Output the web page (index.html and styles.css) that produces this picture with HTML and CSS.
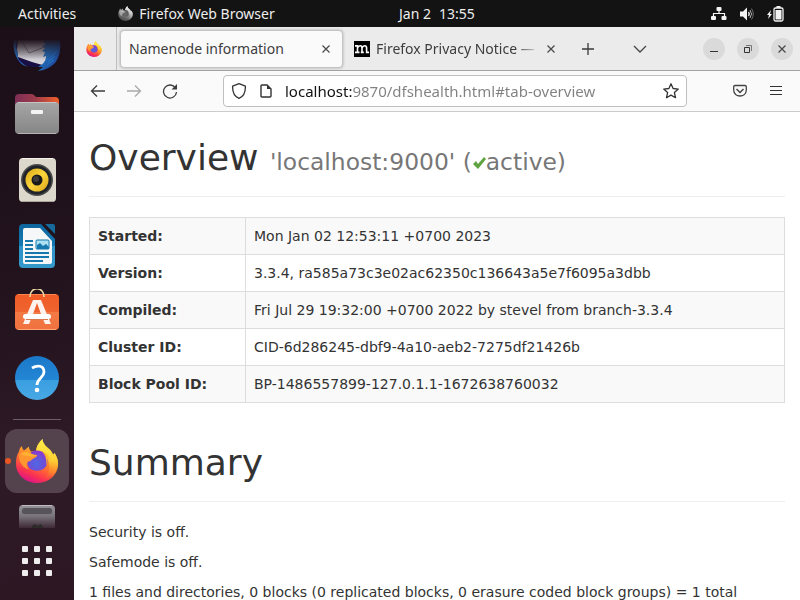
FILE: index.html
```html
<!DOCTYPE html>
<html lang="en">
<head>
<meta charset="utf-8">
<title>Namenode information</title>
<link rel="stylesheet" href="styles.css">
</head>
<body>
<svg class="defs" width="0" height="0" aria-hidden="true">
  <defs>
    <linearGradient id="ff-body" x1=".75" y1=".1" x2=".35" y2="1"><stop offset="0" stop-color="#ffd83a"/><stop offset=".3" stop-color="#ffa42a"/><stop offset=".58" stop-color="#ff6a33"/><stop offset=".8" stop-color="#fb3350"/><stop offset="1" stop-color="#dc1488"/></linearGradient>
    <linearGradient id="ff-tail" x1=".5" y1="0" x2=".4" y2="1"><stop offset="0" stop-color="#fff14a"/><stop offset=".5" stop-color="#ffd036"/><stop offset="1" stop-color="#ff7a1c" stop-opacity="0"/></linearGradient>
    <radialGradient id="ff-globe" cx=".45" cy=".65" r=".65"><stop offset="0" stop-color="#4f68e4"/><stop offset=".6" stop-color="#6d4fd8"/><stop offset="1" stop-color="#8f35cc"/></radialGradient>
    <symbol id="firefox" viewBox="0 0 44 44">
      <path fill="url(#ff-body)" d="M27.500 0c0 4 3 7 6 9.500 3 2.500 4 4.500 4.500 6.500l1.500-2c4 6 4.500 12 2.500 17-3 8-10.500 13-20 13C10 44 1 35 1 25c0-5 .5-9 3-12.500.3-2 1-4 3-5.500 0 2 .8 3 2 4.500l5-4c0 2 .5 3.500 2 5h5c.5-6 3-9 6.500-12.500z"/>
      <path fill="url(#ff-tail)" d="M27.500 0c0 4 3 7 6 9.500 3 2.500 4 4.500 4.500 6.500l1.500-2c4 6 4.500 12 2 18-3 6-8 8-13 8 6-5 7-11 5-18-2-5-7-8-12.500-9.500C21.500 7 24 3.500 27.500 0z"/>
      <path fill="url(#ff-globe)" d="M14 15.500c3-4.500 11-5.500 15.500-1 3.500 3.500 4 9.500 1 13.500-4 5-12.500 5-16.500.5-2.500-3.500-2.500-9 0-13z"/>
      <path fill="#ff9630" d="M4 16c3-4 7-4.500 11.500-2 2 1.800 4.500 1.700 6.500 2 .5 1.500-2 3-4 3.700-1.600 1-2 2.500-5 2.800-2 2.500-1.500 5 .8 8C8 29 3.500 23 4 16z"/>
      <path fill="#ffc038" d="M5.500 14.500c3.500-2 6.500-2 10 0 2 1.500 4.500 1.300 6.500 1.700-3.500 1.500-10 2.500-16.500-1.700z" opacity=".65"/>
      <path fill="#ffb52c" d="M27 12.500c4 1 7.500 4.500 8 9.500l-3-4c.5 3 .5 6-.5 8.500 0-6-.5-10-4.500-14z"/>
    </symbol>
    <symbol id="close" viewBox="0 0 10 10"><path d="M1.500 1.500l7 7M8.500 1.500l-7 7" fill="none" stroke="#484848" stroke-width="1.200"/></symbol>
  </defs>
</svg>

<header class="topbar">
  <div class="topbar-left">
    <button class="topbar-item activities">Activities</button>
    <button class="topbar-item app-menu">
      <svg class="app-icon" width="15" height="15"><use href="#firefox"/></svg>Firefox Web Browser
    </button>
  </div>
  <button class="topbar-item clock"><span>Jan 2</span><span>13:55</span></button>
  <button class="topbar-item status" aria-label="System menu">
    <svg width="16" height="14" viewBox="0 0 16 14"><g fill="#f4f4f4"><rect x="5.500" y="0" width="5" height="4" rx="1"/><rect x="0" y="9" width="5" height="4" rx="1"/><rect x="10.500" y="9" width="5" height="4" rx="1"/></g><path d="M8 4v3M2.500 9V6.500h11V9" fill="none" stroke="#f4f4f4" stroke-width="1.200"/></svg>
    <svg width="16" height="14" viewBox="0 0 16 14"><path fill="#f4f4f4" d="M1 4.500h3L8 0.500v13L4 9.500H1z"/><path d="M9.500 5q1.500 2 0 4" fill="none" stroke="#f4f4f4" stroke-width="1.300"/><path d="M11 3q3 4 0 8" fill="none" stroke="#b0b0b0" stroke-width="1"/><path d="M12.500 1.500q3.500 5.500 0 11" fill="none" stroke="#6a6a6a" stroke-width="1"/></svg>
    <svg width="17" height="16" viewBox="0 0 17 16"><path fill="#f4f4f4" d="M4 4L0 9h2l-1 4 4-5H3z"/><rect x="7" y="2" width="9" height="13" rx="1.500" fill="none" stroke="#f4f4f4" stroke-width="1.300"/><rect x="9.500" y="0" width="4" height="2" fill="#f4f4f4"/><rect x="8.500" y="4" width="6" height="9.500" fill="#f4f4f4"/></svg>
  </button>
</header>

<div class="desktop">
  <nav class="dock" aria-label="Dock">
    <button class="dock-item dock-first" aria-label="Thunderbird Mail">
      <svg width="48" height="55" viewBox="0 0 48 55">
        <defs>
          <linearGradient id="tb-fade" x1="0" y1="0" x2="0" y2="1"><stop offset="0" stop-color="#1c0f18"/><stop offset=".6" stop-color="#1c0f18" stop-opacity="0"/></linearGradient>
          <linearGradient id="tb-blue" x1="0" y1="0" x2="1" y2="1"><stop offset="0" stop-color="#3f86c8"/><stop offset=".5" stop-color="#2367b3"/><stop offset="1" stop-color="#1b2f88"/></linearGradient>
          <linearGradient id="tb-mail" x1="0" y1="0" x2="0" y2="1"><stop offset="0" stop-color="#a7a5ab"/><stop offset="1" stop-color="#dedce2"/></linearGradient>
        </defs>
        <path fill="#1a0f45" d="M1 13h46c1 9-1 18-8 24l-9 3-12 0-12-4c-3-5-5-16-5-23z"/>
        <path fill="url(#tb-mail)" d="M5 13h30v22l-2 4-14-4-14-5-1-8z"/>
        <path fill="none" stroke="#77747e" d="M8 13l8 13 18-7"/>
        <path fill="url(#tb-blue)" d="M31 13h16c1 8 0 17-5 23-4 4-9 7-17 8l5-4h-5c6-3 8-7 8-11l-3 1 2-5-3-1 3-3-3-2 4-2-3-2z"/>
        <path fill="#2a6ab2" d="M1 13h3c-1 5-1 9 1 13v5c1 3 5 6 10 9l-5-2C3 33-1 22 1 13z"/>
        <path d="M35 35l7-6M34 38l7-5M38 30l6-6" stroke="#2b8bd0" fill="none" opacity=".6"/>
        <rect x="0" y="12" width="48" height="34" fill="url(#tb-fade)"/>
      </svg>
    </button>
    <button class="dock-item" aria-label="Files">
      <svg width="48" height="48" viewBox="0 0 48 48">
        <defs><linearGradient id="fold" x1="0" y1="0" x2="1" y2="0"><stop offset="0" stop-color="#7d2e55"/><stop offset=".45" stop-color="#9c3b4c"/><stop offset="1" stop-color="#f0602a"/></linearGradient><linearGradient id="foldf" x1="0" y1="0" x2="0" y2="1"><stop offset="0" stop-color="#a6a6a6"/><stop offset="1" stop-color="#858585"/></linearGradient></defs>
        <path fill="url(#fold)" d="M2 7q0-4 4-4h12q2 0 3 1l2 2h19q4 0 4 4v16H2z"/>
        <rect x="2" y="11" width="44" height="32" rx="4" fill="url(#foldf)"/><path d="M5 11.500h38" stroke="#c5c5c5"/><path d="M5 42.500h38" stroke="#b4b4b4"/>
        <rect x="18" y="19" width="12" height="4" rx="1" fill="#f4f4f4"/>
      </svg>
    </button>
    <button class="dock-item" aria-label="Rhythmbox">
      <svg width="48" height="48" viewBox="0 0 48 48">
        <defs><linearGradient id="yel" x1="0" y1="0" x2="1" y2="1"><stop offset="0" stop-color="#d8a716"/><stop offset=".5" stop-color="#fcd53b"/><stop offset="1" stop-color="#dba51a"/></linearGradient></defs>
        <rect x="6" y="1" width="37" height="44" rx="4" fill="#ddd8cc"/><path d="M9 1.500h31" stroke="#f6f3ea"/><path d="M9 44.500h31" stroke="#aaa59a"/>
        <circle cx="24" cy="23" r="16" fill="#4d4d4e"/><circle cx="24" cy="23" r="14.500" fill="#202329"/><circle cx="24" cy="23" r="11.500" fill="url(#yel)"/><circle cx="24" cy="23" r="5.500" fill="#191919"/><circle cx="23" cy="22" r="3" fill="#3b3b3b"/>
      </svg>
    </button>
    <button class="dock-item" aria-label="LibreOffice Writer">
      <svg width="48" height="48" viewBox="0 0 48 48">
        <defs><linearGradient id="wr" x1="0" y1="0" x2="0" y2="1"><stop offset="0" stop-color="#0f659d"/><stop offset=".5" stop-color="#1479b2"/><stop offset=".51" stop-color="#2d94c8"/><stop offset="1" stop-color="#3498ca"/></linearGradient></defs>
        <path fill="url(#wr)" d="M10 1h18l14 15v25q0 4-4 4H10q-4 0-4-4V5q0-4 4-4z"/><path d="M32 1h8q2 0 2 2v8z" fill="#176a9c"/>
        <path fill="#f5f7f8" d="M12 5h15l12 13v21q0 2-2 2H12q-2 0-2-2V7q0-2 2-2z"/>
        <path d="M12 18h8M12 22h8M12 26h8M12 30h24M12 34h24M12 38h18" stroke="#1678ac" stroke-width="1.800"/>
        <rect x="23" y="17" width="13" height="9" rx="1" fill="#aee0f4" stroke="#1678ac"/><path fill="#1678ac" d="M24 26v-4l3-2 3 3 3-2 3 3v2z"/>
      </svg>
    </button>
    <button class="dock-item" aria-label="Ubuntu Software">
      <svg width="48" height="48" viewBox="0 0 48 48">
        <defs><linearGradient id="sw" x1="0" y1="0" x2="0" y2="1"><stop offset="0" stop-color="#f15c25"/><stop offset=".5" stop-color="#ee6430"/><stop offset=".51" stop-color="#f37a45"/><stop offset="1" stop-color="#ef713e"/></linearGradient></defs>
        <rect x="2" y="5" width="44" height="36" rx="4" fill="url(#sw)"/><path d="M5 40.500h38" stroke="#ffa779"/><path d="M5 5.500h38" stroke="#ff8652"/>
        <path d="M17 8c0-11 14-11 14 0" fill="none" stroke="#eed9a3" stroke-width="1.600"/>
        <path fill="#fff2ed" fill-rule="evenodd" d="M20 11h8l10 24h-6l-2-5H18l-2 5h-6zM24 14l-4 11h8z"/><rect x="10" y="25" width="28" height="5" rx="2.500" fill="#fff"/><path d="M13 30.500h22" stroke="#d9794e"/>
      </svg>
    </button>
    <button class="dock-item" aria-label="Help">
      <svg width="48" height="48" viewBox="0 0 48 48">
        <defs><linearGradient id="hp" x1="0" y1="0" x2="0" y2="1"><stop offset="0" stop-color="#1b78c8"/><stop offset=".54" stop-color="#2386d4"/><stop offset=".55" stop-color="#3a9ee0"/><stop offset="1" stop-color="#48a8e4"/></linearGradient></defs>
        <circle cx="24" cy="23" r="22" fill="url(#hp)"/><path d="M19 13c5-3 12-3 12 4 0 6-7 6-7 13" fill="none" stroke="#fff" stroke-width="2.800"/><circle cx="24" cy="35" r="2.300" fill="#fff"/>
      </svg>
    </button>
    <hr class="dock-rule">
    <button class="dock-item dock-active" aria-label="Firefox">
      <svg width="44" height="44"><use href="#firefox"/></svg>
    </button>
    <button class="dock-item dock-trash" aria-label="Trash">
      <svg width="38" height="24" viewBox="0 0 38 24">
        <defs><linearGradient id="tr" x1="0" y1="0" x2="0" y2="1"><stop offset="0" stop-color="#96939a"/><stop offset=".5" stop-color="#77717a"/><stop offset="1" stop-color="#3d2935"/></linearGradient></defs>
        <path fill="url(#tr)" d="M1 24V5q0-4 4-4h28q4 0 4 4v19z"/><path d="M4 1.500h30" stroke="#bebabf"/><rect x="4" y="4" width="30" height="6" rx="2.500" fill="#56545a"/><path fill="#2d2c2b" d="M13 24q1-3 4-4l3 2 2-2q3 1 3 4z"/>
      </svg>
    </button>
    <button class="dock-apps" aria-label="Show Applications">
      <svg width="30" height="30" viewBox="0 0 30 30" fill="#efedee"><rect width="6" height="6" rx="1"/><rect x="12" width="6" height="6" rx="1"/><rect x="24" width="6" height="6" rx="1"/><rect y="12" width="6" height="6" rx="1"/><rect x="12" y="12" width="6" height="6" rx="1"/><rect x="24" y="12" width="6" height="6" rx="1"/><rect y="24" width="6" height="6" rx="1"/><rect x="12" y="24" width="6" height="6" rx="1"/><rect x="24" y="24" width="6" height="6" rx="1"/></svg>
    </button>
  </nav>

  <div class="browser">
    <div class="tabstrip">
      <button class="pinned" aria-label="Firefox View"><svg width="16" height="16"><use href="#firefox"/></svg></button>
      <div class="tab tab-active"><span class="tab-title">Namenode information</span><button class="icon-btn" aria-label="Close tab"><svg width="10" height="10"><use href="#close"/></svg></button></div>
      <div class="tab">
        <svg class="favicon" width="16" height="16" viewBox="0 0 16 16"><rect width="16" height="16" fill="#000"/><path d="M1 4.900h2.500V12M1 11.400h4.500M3.500 7q.8-2.200 2.600-2.200Q8 4.800 8 7v5M6.800 11.400h3M8 7q.8-2.200 2.600-2.200 2 0 2 2.200v4.400H15" fill="none" stroke="#fff" stroke-width="1.600"/></svg>
        <span class="tab-title tab-fade">Firefox Privacy Notice —</span><button class="icon-btn" aria-label="Close tab"><svg width="10" height="10"><use href="#close"/></svg></button>
      </div>
      <button class="icon-btn new-tab" aria-label="New tab"><svg width="14" height="14" viewBox="0 0 14 14"><path d="M7 1v12M1 7h12" stroke="#3a3a3a" stroke-width="1.300"/></svg></button>
      <button class="icon-btn list-tabs" aria-label="List all tabs"><svg width="14" height="8" viewBox="0 0 14 8"><path d="M1 1l6 6 6-6" fill="none" stroke="#454545" stroke-width="1.300"/></svg></button>
      <div class="window-controls">
        <button aria-label="Minimize"><svg width="10" height="10" viewBox="0 0 10 10"><path d="M1 7.500h8" stroke="#333"/></svg></button>
        <button aria-label="Restore"><svg width="10" height="10" viewBox="0 0 10 10"><path d="M1.500 3.500h5v5h-5z" fill="none" stroke="#333"/><path d="M3 1.500h5.500V7" fill="none" stroke="#777"/></svg></button>
        <button aria-label="Close"><svg width="10" height="10"><use href="#close"/></svg></button>
      </div>
    </div>

    <div class="toolbar">
      <div class="nav-buttons">
        <button class="icon-btn" aria-label="Back"><svg width="16" height="16" viewBox="0 0 16 16"><path d="M15 8H2M7 2.500L1.500 8 7 13.500" fill="none" stroke="#3d3d3d" stroke-width="1.300"/></svg></button>
        <button class="icon-btn" aria-label="Forward" disabled><svg width="16" height="16" viewBox="0 0 16 16"><path d="M1 8h13M9 2.500L14.500 8 9 13.500" fill="none" stroke="#a9a9a9" stroke-width="1.300"/></svg></button>
        <button class="icon-btn" aria-label="Reload"><svg width="16" height="16" viewBox="0 0 16 16"><path d="M13.500 5A6.500 6.500 0 1 0 14.500 9" fill="none" stroke="#3d3d3d" stroke-width="1.300"/><path d="M15 1v5.500H9.500z" fill="#3d3d3d"/></svg></button>
      </div>
      <div class="urlbar">
        <svg width="16" height="16" viewBox="0 0 16 16"><path d="M8 .7l6.400 2.400C14.600 9 12.500 13.500 8 15.400 3.500 13.500 1.400 9 1.600 3.100z" fill="none" stroke="#333" stroke-width="1.300" stroke-linejoin="round"/></svg>
        <svg width="14" height="14" viewBox="0 0 14 14"><path d="M2 2q0-1 1-1h5l4 4v7q0 1-1 1H3q-1 0-1-1z" fill="none" stroke="#333" stroke-width="1.400"/><path d="M8 .5V5h4.500z" fill="#333"/></svg>
        <input class="url" type="text" aria-label="Address" value="localhost:9870/dfshealth.html#tab-overview">
        <button class="icon-btn" aria-label="Bookmark this page"><svg width="16" height="16" viewBox="0 0 16 16"><path d="M8 .8l2.100 4.700 5.200.6-3.900 3.500 1.100 5.100L8 12.100l-4.500 2.600 1.100-5.100L.7 6.100l5.200-.6z" fill="none" stroke="#333" stroke-width="1.300" stroke-linejoin="round"/></svg></button>
      </div>
      <div class="tool-buttons">
        <button class="icon-btn" aria-label="Save to Pocket"><svg width="14" height="14" viewBox="0 0 14 14"><path d="M2 1.500h10q1.300 0 1.300 1.300V6c0 8-12.600 8-12.600 0V2.800Q.7 1.500 2 1.500z" fill="none" stroke="#444" stroke-width="1.300"/><path d="M3.500 5L7 8.500 10.500 5" fill="none" stroke="#444" stroke-width="1.500"/></svg></button>
        <button class="icon-btn" aria-label="Open application menu"><svg width="12" height="12" viewBox="0 0 12 12"><path d="M0 1.500h12M0 5.500h12M0 9.500h12" stroke="#333"/></svg></button>
      </div>
    </div>

    <main class="page">
      <div class="page-header">
        <h1>Overview <small>'localhost:9000' (<svg class="check" width="14" height="14" viewBox="0 0 14 14"><path d="M1 8l3-3 2 3 6-7 2 2-8 10z" fill="#5fa341"/></svg>active)</small></h1>
      </div>
      <table class="facts">
        <tr><th scope="row">Started:</th><td>Mon Jan 02 12:53:11 +0700 2023</td></tr>
        <tr><th scope="row">Version:</th><td>3.3.4, ra585a73c3e02ac62350c136643a5e7f6095a3dbb</td></tr>
        <tr><th scope="row">Compiled:</th><td>Fri Jul 29 19:32:00 +0700 2022 by stevel from branch-3.3.4</td></tr>
        <tr><th scope="row">Cluster ID:</th><td>CID-6d286245-dbf9-4a10-aeb2-7275df21426b</td></tr>
        <tr><th scope="row">Block Pool ID:</th><td>BP-1486557899-127.0.1.1-1672638760032</td></tr>
      </table>
      <div class="page-header">
        <h1>Summary</h1>
      </div>
      <p>Security is off.</p>
      <p>Safemode is off.</p>
      <p>1 files and directories, 0 blocks (0 replicated blocks, 0 erasure coded block groups) = 1 total</p>
    </main>
  </div>
</div>
</body>
</html>
```

FILE: styles.css
```css
* { box-sizing: border-box; }

body {
  margin: 0;
  height: 100vh;
  overflow: hidden;
  display: flex;
  flex-direction: column;
  font-family: "Noto Sans", "Open Sans", sans-serif;
  font-size: 14px;
}

button {
  border: 0;
  padding: 0;
  margin: 0;
  background: none;
  color: inherit;
  font: inherit;
}

svg { display: block; flex: none; }
.defs { position: absolute; }

/* Top bar */
.topbar {
  flex: none;
  height: 27px;
  display: grid;
  grid-template-columns: 399px 1fr auto;
  padding-right: 16px;
  background: #131313;
  color: #ededed;
}
.topbar-left { display: flex; padding-left: 18px; gap: 42px; }
.topbar-item { display: flex; align-items: center; white-space: nowrap; }
.app-menu { gap: 6px; }
.app-icon { filter: grayscale(1); }
.clock { gap: 8px; }
.status { gap: 12px; }

/* Dock */
.desktop { flex: 1; min-height: 0; display: flex; }
.dock {
  flex: none;
  width: 74px;
  display: flex;
  flex-direction: column;
  align-items: center;
  overflow: hidden;
  background: linear-gradient(170deg, #1c0f18 0%, #22131d 45%, #2e1a26 75%, #2c1723 100%);
}
.dock-item {
  flex: none;
  width: 64px;
  height: 66px;
  display: flex;
  align-items: center;
  justify-content: center;
}
.dock-first { height: 55px; }
.dock-rule {
  flex: none;
  width: 48px;
  height: 1px;
  margin: 7px 0 9px;
  border: 0;
  background: #6d5f68;
}
.dock-active {
  position: relative;
  height: 64px;
  border-radius: 12px;
  background: #54434d;
}
.dock-active::before {
  content: "";
  position: absolute;
  left: 0;
  top: 29px;
  width: 6px;
  height: 6px;
  border-radius: 3px;
  background: #e95420;
}
.dock-trash { height: 35px; align-items: flex-end; }
.dock-apps { margin-top: 18px; }

/* Browser chrome */
.browser { flex: 1; min-width: 0; display: flex; flex-direction: column; background: #fff; }
.tabstrip {
  flex: none;
  height: 44px;
  display: flex;
  align-items: center;
  background: #ebebeb;
  border-bottom: 1px solid #a2a2a2;
  color: #3d3d3d;
}
.icon-btn { flex: none; display: flex; align-items: center; justify-content: center; }
.pinned {
  align-self: stretch;
  width: 43px;
  padding-right: 3px;
  display: flex;
  align-items: center;
  justify-content: center;
  border-right: 1px solid #bdbdbd;
}
.tab {
  flex: 0 1 224px;
  min-width: 0;
  height: 38px;
  display: flex;
  align-items: center;
  gap: 6px;
  padding: 0 11px;
}
.tab-active {
  flex-basis: 223px;
  margin-left: 3px;
  padding-left: 8px;
  background: #fafafa;
  border: 1px solid #c4c4c4;
  border-radius: 4px;
  box-shadow: 0 0 3px #aaaaaa;
}
.tab-title { flex: 1; min-width: 0; overflow: hidden; white-space: nowrap; }
.tab-fade { -webkit-mask-image: linear-gradient(90deg, #000 85%, transparent); mask-image: linear-gradient(90deg, #000 85%, transparent); }
.new-tab { margin-left: 14px; }
.list-tabs { margin-left: 38px; }
.window-controls { margin-left: auto; padding-right: 7px; display: flex; gap: 12px; }
.window-controls button {
  width: 22px;
  height: 22px;
  display: flex;
  align-items: center;
  justify-content: center;
  border-radius: 50%;
  background: #dadada;
}
.toolbar {
  flex: none;
  height: 41px;
  display: flex;
  align-items: center;
  background: #fafafa;
  border-bottom: 1px solid #cccccc;
}
.nav-buttons { flex: none; display: flex; gap: 20px; padding: 0 45px 0 16px; }
.urlbar {
  flex: 1;
  min-width: 0;
  height: 32px;
  display: flex;
  align-items: center;
  gap: 12px;
  padding: 0 7px;
  background: #fff;
  border: 1px solid #bfbfbf;
  border-radius: 4px;
}
.url {
  flex: 1;
  min-width: 0;
  height: 28px;
  padding: 0;
  border: 0;
  outline: 0;
  font: inherit;
  font-size: 15px;
  color: transparent;
  background: linear-gradient(90deg, #111111 67px, #808080 67px);
  -webkit-background-clip: text;
  background-clip: text;
}
.tool-buttons { flex: none; display: flex; gap: 23px; padding: 0 18px 0 46px; }

/* Page */
.page {
  flex: 1;
  min-height: 0;
  overflow: hidden;
  padding: 26px 15px 0;
  font-family: "DejaVu Sans", sans-serif;
  line-height: 20px;
  color: #333333;
}
.page-header { margin-bottom: 20px; padding-bottom: 19px; border-bottom: 1px solid #eeeeee; }
h1 { margin: 0; font-size: 36px; font-weight: 400; line-height: 39px; white-space: nowrap; }
h1 small { font-size: 65%; line-height: 1; color: #777777; }
.check { display: inline-block; }
.facts { width: 100%; margin-bottom: 40px; border-collapse: collapse; }
.facts th, .facts td { padding: 8px; border: 1px solid #dddddd; text-align: left; }
.facts th { width: 156px; font-weight: 700; }
.facts tr:nth-child(odd) { background: #f9f9f9; }
p { margin: 0 0 10px; white-space: nowrap; }
```
